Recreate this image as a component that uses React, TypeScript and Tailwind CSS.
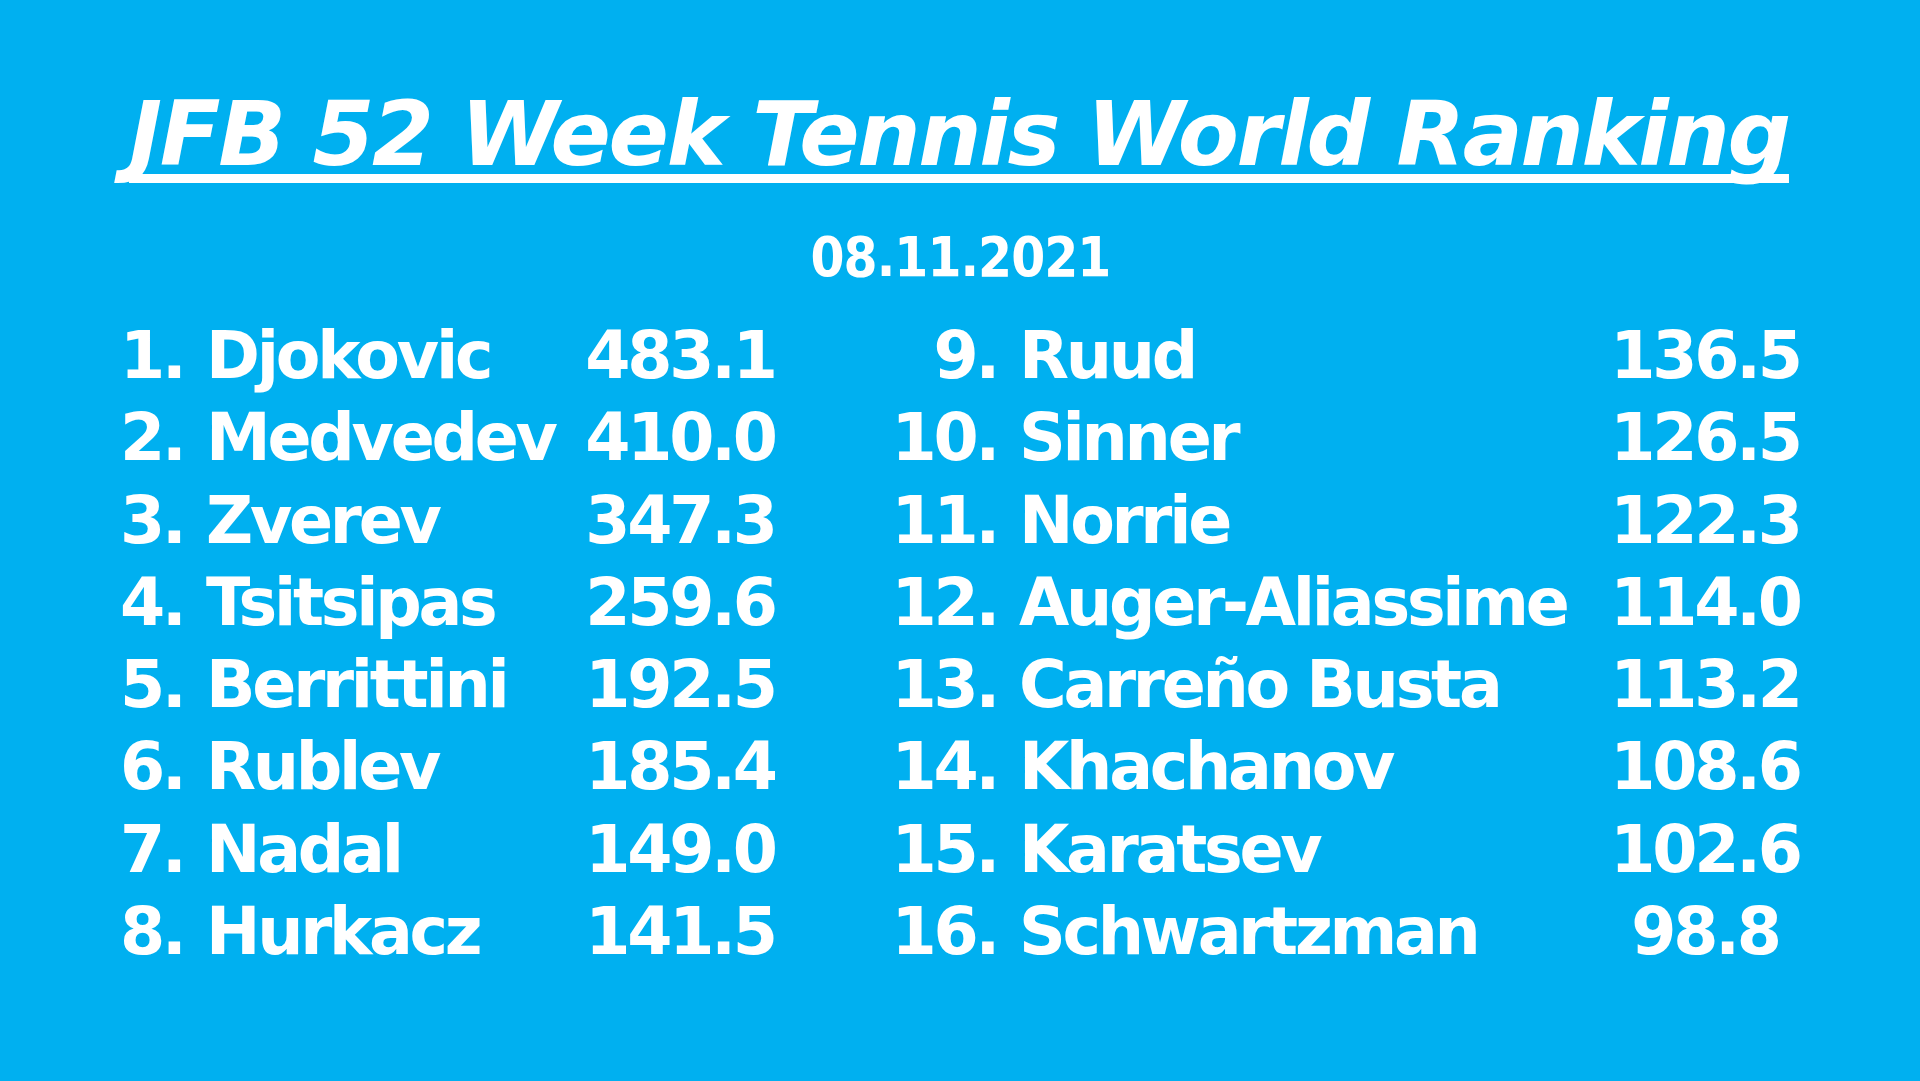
import React from "react";

const left: [string, string, string][] = [
  ["1.", "Djokovic", "483.1"],
  ["2.", "Medvedev", "410.0"],
  ["3.", "Zverev", "347.3"],
  ["4.", "Tsitsipas", "259.6"],
  ["5.", "Berrittini", "192.5"],
  ["6.", "Rublev", "185.4"],
  ["7.", "Nadal", "149.0"],
  ["8.", "Hurkacz", "141.5"],
];

const right: [string, string, string][] = [
  ["9.", "Ruud", "136.5"],
  ["10.", "Sinner", "126.5"],
  ["11.", "Norrie", "122.3"],
  ["12.", "Auger-Aliassime", "114.0"],
  ["13.", "Carreño Busta", "113.2"],
  ["14.", "Khachanov", "108.6"],
  ["15.", "Karatsev", "102.6"],
  ["16.", "Schwartzman", "98.8"],
];

export default function App() {
  return (
    <div
      className="w-full h-[1081px] bg-[#00b0f0] text-white flex flex-col items-center overflow-hidden"
      style={{ fontFamily: '"DejaVu Sans", Verdana, sans-serif' }}
    >
      <h1 className="pt-[90px] pr-[2px] text-[89px] leading-none font-bold italic tracking-[-0.026em] underline decoration-[9px] underline-offset-[9px] [text-decoration-skip-ink:none] whitespace-nowrap">
        JFB 52 Week Tennis World Ranking
      </h1>
      <div className="mt-[51px] text-[55px] leading-none font-bold tracking-[-0.02em] scale-x-[0.89] whitespace-nowrap">
        08.11.2021
      </div>
      <div className="mt-[30px] w-full flex flex-col text-[65px] leading-[82.3px] font-bold tracking-[-0.05em] whitespace-nowrap">
        {left.map((l, i) => {
          const r = right[i];
          return (
            <div key={i} className="flex pl-[120px]">
              <div className="w-[86px]">{l[0]}</div>
              <div className="w-[374px]">{l[1]}</div>
              <div className="w-[200px] text-center">{l[2]}</div>
              <div className="w-[100px]" />
              <div className="w-[139px] text-right pr-[22px]">{r[0]}</div>
              <div className="w-[586px]">{r[1]}</div>
              <div className="w-[200px] text-center">{r[2]}</div>
            </div>
          );
        })}
      </div>
    </div>
  );
}
